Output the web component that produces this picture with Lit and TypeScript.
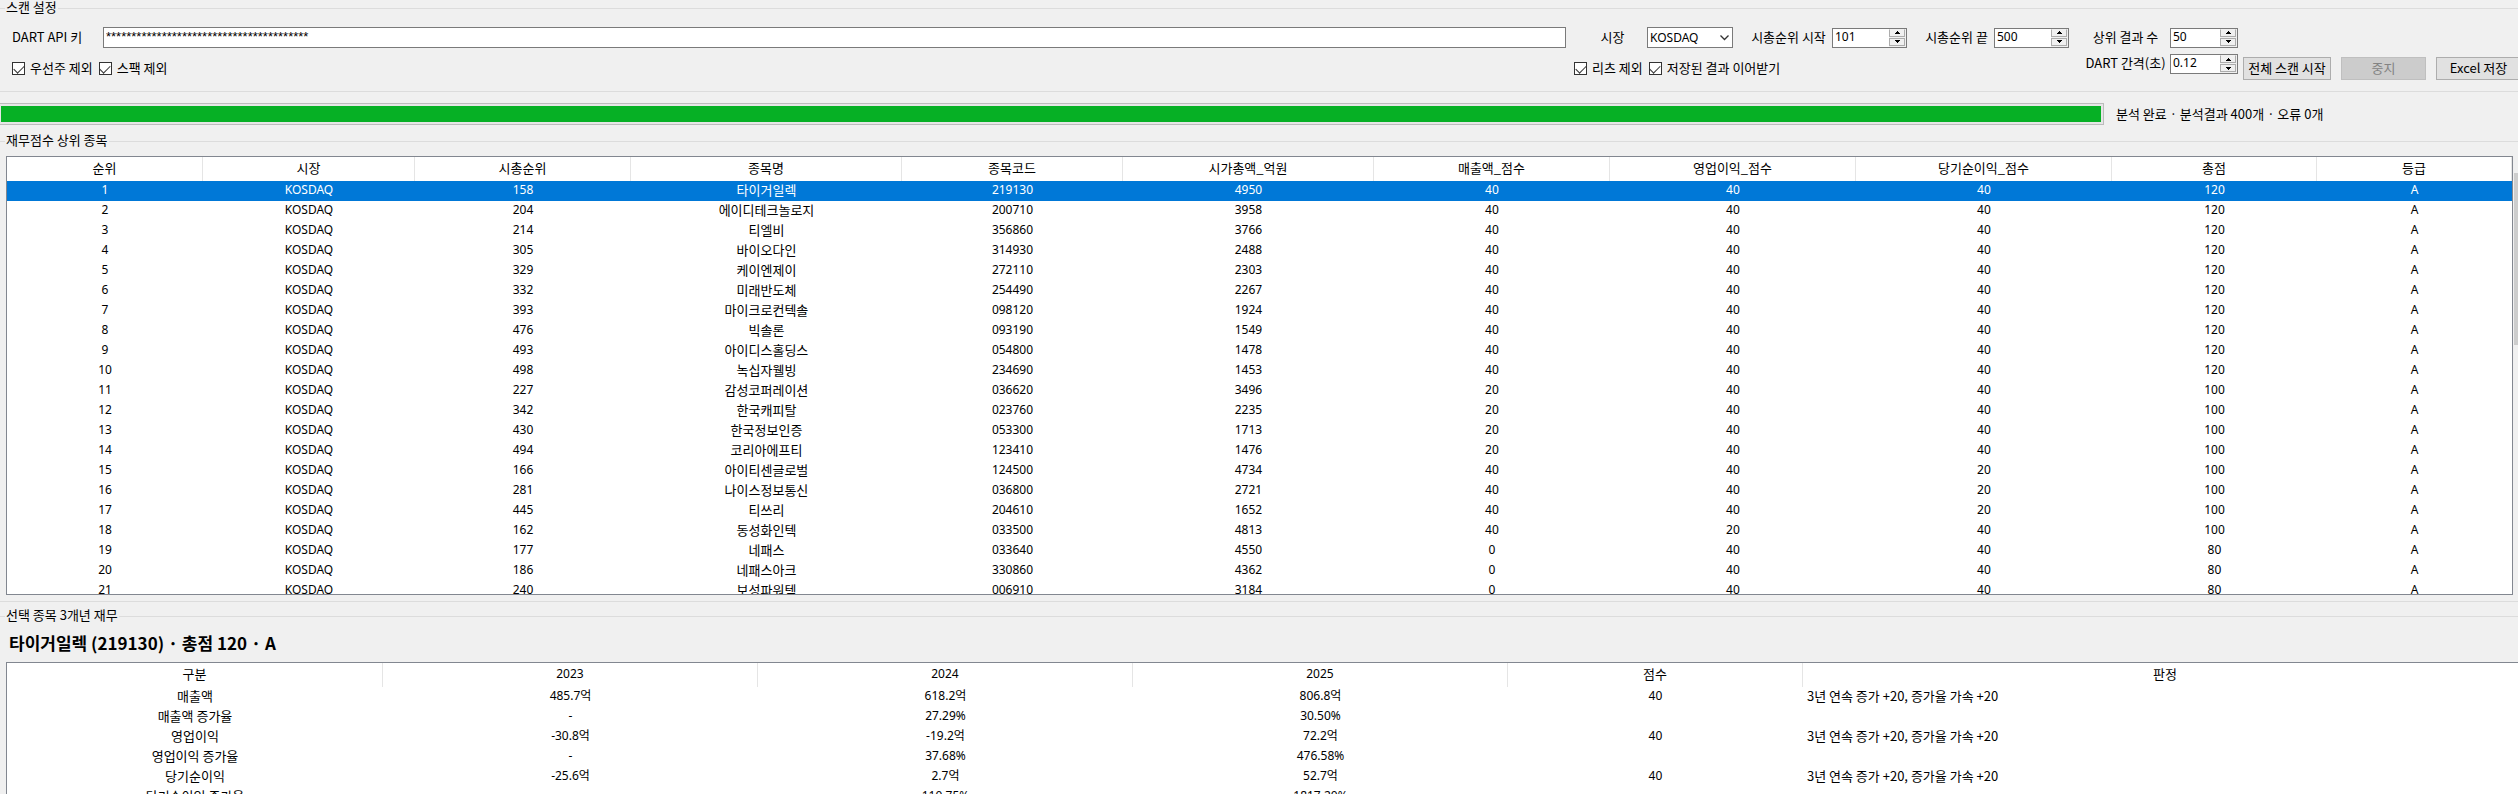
import { LitElement, html, css } from "lit";
import { customElement, property } from "lit/decorators.js";
import { classMap } from "lit/directives/class-map.js";

type Stock = [number, number, string, string, number, number, number, number, number];

const STOCKS: Stock[] = [
  [1, 158, "타이거일렉", "219130", 4950, 40, 40, 40, 120],
  [2, 204, "에이디테크놀로지", "200710", 3958, 40, 40, 40, 120],
  [3, 214, "티엘비", "356860", 3766, 40, 40, 40, 120],
  [4, 305, "바이오다인", "314930", 2488, 40, 40, 40, 120],
  [5, 329, "케이엔제이", "272110", 2303, 40, 40, 40, 120],
  [6, 332, "미래반도체", "254490", 2267, 40, 40, 40, 120],
  [7, 393, "마이크로컨텍솔", "098120", 1924, 40, 40, 40, 120],
  [8, 476, "빅솔론", "093190", 1549, 40, 40, 40, 120],
  [9, 493, "아이디스홀딩스", "054800", 1478, 40, 40, 40, 120],
  [10, 498, "녹십자웰빙", "234690", 1453, 40, 40, 40, 120],
  [11, 227, "감성코퍼레이션", "036620", 3496, 20, 40, 40, 100],
  [12, 342, "한국캐피탈", "023760", 2235, 20, 40, 40, 100],
  [13, 430, "한국정보인증", "053300", 1713, 20, 40, 40, 100],
  [14, 494, "코리아에프티", "123410", 1476, 20, 40, 40, 100],
  [15, 166, "아이티센글로벌", "124500", 4734, 40, 40, 20, 100],
  [16, 281, "나이스정보통신", "036800", 2721, 40, 40, 20, 100],
  [17, 445, "티쓰리", "204610", 1652, 40, 40, 20, 100],
  [18, 162, "동성화인텍", "033500", 4813, 40, 20, 40, 100],
  [19, 177, "네패스", "033640", 4550, 0, 40, 40, 80],
  [20, 186, "네패스아크", "330860", 4362, 0, 40, 40, 80],
  [21, 240, "보성파워텍", "006910", 3184, 0, 40, 40, 80],
];

const STOCK_HEADS = ["순위", "시장", "시총순위", "종목명", "종목코드", "시가총액_억원", "매출액_점수", "영업이익_점수", "당기순이익_점수", "총점", "등급"];
const VERDICT = "3년 연속 증가 +20, 증가율 가속 +20";
const DETAIL_HEADS = ["구분", "2023", "2024", "2025", "점수", "판정"];
const DETAILS: string[][] = [
  ["매출액", "485.7억", "618.2억", "806.8억", "40", VERDICT],
  ["매출액 증가율", "-", "27.29%", "30.50%", "", ""],
  ["영업이익", "-30.8억", "-19.2억", "72.2억", "40", VERDICT],
  ["영업이익 증가율", "-", "37.68%", "476.58%", "", ""],
  ["당기순이익", "-25.6억", "2.7억", "52.7억", "40", VERDICT],
  ["당기순이익 증가율", "-", "110.75%", "1817.20%", "", ""],
];

const base = css`
  * { box-sizing: border-box; }
  input, select, button { font: inherit; color: inherit; margin: 0; border-radius: 0; }
`;

@customElement("spin-box")
class SpinBox extends LitElement {
  @property() value = "";
  @property() label = "";
  @property() step = "1";

  static styles = [base, css`
    :host { display: block; height: 20px; }
    .box { display: flex; height: 20px; background: #fff; border: 1px solid #7a7a7a; }
    .field {
      flex: 1; min-width: 0; border: 0; outline: 0; padding: 0 2px; background: none;
      line-height: 15px; height: 15px; font-size: 12px; appearance: textfield; -moz-appearance: textfield;
    }
    .field::-webkit-inner-spin-button { appearance: none; -webkit-appearance: none; margin: 0; }
    .arrows { display: flex; flex-direction: column; width: 17px; gap: 1px; padding: 0 1px 1px 0; background: #f0f0f0; }
    .arrow {
      flex: 1; min-height: 0; padding: 0; display: flex; align-items: center; justify-content: center;
      background: #f0f0f0; border: 1px solid #acacac;
    }
    .up { border-top-color: #f0f0f0; }
    svg { display: block; width: 5px; height: 3px; }
  `];

  private nudge(dir: number) {
    const step = Number(this.step);
    const digits = (this.step.split(".")[1] ?? "").length;
    this.value = (Number(this.value) + dir * step).toFixed(digits);
  }

  render() {
    return html`<div class="box">
      <input class="field" type="number" aria-label=${this.label} step=${this.step} .value=${this.value} />
      <span class="arrows">
        <button class="arrow up" aria-label="증가" @click=${() => this.nudge(1)}>
          <svg viewBox="0 0 5 3" shape-rendering="crispEdges"><path d="M2 0h1v1h1v1h1v1H0V2h1V1h1z" /></svg>
        </button>
        <button class="arrow" aria-label="감소" @click=${() => this.nudge(-1)}>
          <svg viewBox="0 0 5 3" shape-rendering="crispEdges"><path d="M0 0h5v1H4v1H3v1H2V2H1V1H0z" /></svg>
        </button>
      </span>
    </div>`;
  }
}

@customElement("app-root")
class AppRoot extends LitElement {
  static styles = [base, css`
    :host {
      display: flex; flex-direction: column; height: 100vh; overflow: hidden;
      background: #f0f0f0; color: #000;
      font: 13px/17px "Noto Sans CJK KR", "Noto Sans", sans-serif;
    }
    .group { margin: 0; padding: 0; border: 0 solid #dcdcdc; border-width: 1px 0; min-width: 0; flex: none; }
    .legend { margin-left: 5px; padding: 0 1px; height: 17px; line-height: 13px; }
    .latin { font-family: "Noto Sans", "Noto Sans CJK KR", sans-serif; font-size: 12px; }

    .settings {
      display: grid; row-gap: 6px; padding: 10px 0 8px 12px; align-items: center;
      grid-template-columns: 91px minmax(200px, 1fr) 81px 86px 99px 75px 87px 75px 101px 68px 280px;
      grid-template-rows: 21px 29px;
    }
    .name { padding-bottom: 2px; }
    .key {
      width: 100%; height: 21px; padding: 0 2px 3px; border: 1px solid #7a7a7a; outline: 0; background: #fff;
      font: 13px/16px "Liberation Sans", Arial, sans-serif;
    }
    .caption { padding: 0 0 2px 12px; text-align: center; white-space: nowrap; line-height: 18px; }
    .combo { position: relative; height: 21px; }
    .select {
      width: 100%; height: 21px; padding: 0 2px 1px; border: 1px solid #7a7a7a; background: #fff; outline: 0;
      appearance: none; -webkit-appearance: none; line-height: 17px;
    }
    .chevron { position: absolute; right: 4px; top: 8px; width: 9px; height: 6px; pointer-events: none; }
    .top { align-self: start; }
    .checks { display: flex; gap: 6px; white-space: nowrap; }
    .checks-left { grid-column: 1 / 3; }
    .checks-right { grid-column: 3 / 9; padding-left: 8px; }
    .check { display: flex; align-items: center; gap: 5px; }
    .tick {
      appearance: none; -webkit-appearance: none; width: 13px; height: 13px; border: 1px solid #333; background: #fff;
      display: grid; place-items: center;
    }
    .tick:checked::before {
      content: ""; width: 9px; height: 5px; border: solid #333; border-width: 0 0 1px 1px;
      transform: translateY(-1px) rotate(-45deg);
    }
    .actions { display: flex; gap: 10px; padding-left: 5px; }
    .button {
      flex: none; width: 85px; height: 23px; padding: 0 0 2px; border: 1px solid #adadad; background: #e1e1e1;
      white-space: nowrap; line-height: 17px;
    }
    .button.primary { width: 88px; }
    .button:disabled { background: #ccc; border-color: #bfbfbf; color: #838383; }

    .status { display: flex; align-items: center; margin: 11px 0 8px -2px; flex: none; }
    .bar {
      flex: 1; height: 22px; appearance: none; -webkit-appearance: none; padding: 2px;
      border: 1px solid #bcbcbc; background: #e6e6e6;
    }
    .bar::-webkit-progress-bar { background: #e6e6e6; }
    .bar::-webkit-progress-value { background: #06b025; }
    .message { width: 414px; padding: 0 0 2px 12px; white-space: nowrap; }

    .list { display: flex; gap: 1px; padding: 6px 0 6px 6px; }
    .sheet { flex: 1; min-width: 0; height: 439px; overflow: hidden; background: #fff; border: 1px solid #828790; }
    .track { flex: none; width: 4px; height: 439px; padding-top: 17px; }
    .thumb { height: 172px; background: #cdcdcd; }

    .table { width: 100%; table-layout: fixed; border-collapse: separate; border-spacing: 0; }
    .table th, .table td {
      padding: 0 0 2px; text-align: center; white-space: nowrap; overflow: hidden; font-weight: 400; line-height: 18px;
    }
    .table th { height: 24px; border-right: 1px solid #e5e5e5; }
    .table td { height: 20px; }
    .picked { background: #0078d7; color: #fff; }
    .table td.verdict { text-align: left; padding-left: 4px; }

    .lower { margin-top: 6px; flex: 1 0 0; border-bottom: 0; min-height: 0; }
    .title { margin: 0; padding: 0 0 2px 9px; font-size: 17px; line-height: 35px; font-weight: 700; }
    .detail { margin: 0 -11px 0 6px; height: 160px; background: #fff; border: 1px solid #828790; }
  `];

  private check(id: string, text: string) {
    return html`<label class="check" for=${id}
      ><input class="tick" id=${id} type="checkbox" checked /><span class="name">${text}</span></label
    >`;
  }

  private cols(widths: number[]) {
    const total = widths.reduce((a, b) => a + b, 0);
    return html`<colgroup>${widths.map((w) => html`<col style="width:${(w / total) * 100}%" />`)}</colgroup>`;
  }

  render() {
    return html`
      <fieldset class="group">
        <legend class="legend">스캔 설정</legend>
        <div class="settings">
          <label class="name" for="key">DART API 키</label>
          <input class="key" id="key" type="text" .value=${"*".repeat(40)} />
          <label class="caption" for="market">시장</label>
          <div class="combo">
            <select class="select latin" id="market"><option>KOSDAQ</option><option>KOSPI</option></select>
            <svg class="chevron" viewBox="0 0 9 6"><path d="M.5.5l4 4 4-4" fill="none" stroke="#333" stroke-width="1.3" /></svg>
          </div>
          <span class="caption">시총순위 시작</span>
          <spin-box class="latin" label="시총순위 시작" value="101"></spin-box>
          <span class="caption">시총순위 끝</span>
          <spin-box class="latin" label="시총순위 끝" value="500"></spin-box>
          <span class="caption">상위 결과 수</span>
          <spin-box class="latin" label="상위 결과 수" value="50"></spin-box>
          <span></span>
          <div class="checks checks-left">${this.check("pref", "우선주 제외")}${this.check("spac", "스팩 제외")}</div>
          <div class="checks checks-right">${this.check("reit", "리츠 제외")}${this.check("resume", "저장된 결과 이어받기")}</div>
          <span class="caption top">DART 간격(초)</span>
          <spin-box class="latin top" label="DART 간격(초)" value="0.12" step="0.01"></spin-box>
          <div class="actions">
            <button class="button primary">전체 스캔 시작</button>
            <button class="button" disabled>중지</button>
            <button class="button">Excel 저장</button>
          </div>
        </div>
      </fieldset>

      <div class="status">
        <progress class="bar" max="100" value="100" aria-label="분석 진행률"></progress>
        <span class="message">분석 완료 · 분석결과 400개 · 오류 0개</span>
      </div>

      <fieldset class="group">
        <legend class="legend">재무점수 상위 종목</legend>
        <div class="list">
          <div class="sheet">
            <table class="table">
              ${this.cols([196, 212, 216, 271, 221, 251, 236, 246, 256, 205, 195])}
              <thead><tr>${STOCK_HEADS.map((h) => html`<th>${h}</th>`)}</tr></thead>
              <tbody>
                ${STOCKS.map(([rank, capRank, name, code, cap, ...scores], i) => html`
                  <tr class=${classMap({ picked: i === 0 })}>
                    <td class="latin">${rank}</td><td class="latin">KOSDAQ</td><td class="latin">${capRank}</td>
                    <td>${name}</td><td class="latin">${code}</td><td class="latin">${cap}</td>
                    ${scores.map((s) => html`<td class="latin">${s}</td>`)}
                    <td class="latin">A</td>
                  </tr>`)}
              </tbody>
            </table>
          </div>
          <div class="track"><div class="thumb"></div></div>
        </div>
      </fieldset>

      <fieldset class="group lower">
        <legend class="legend">선택 종목 3개년 재무</legend>
        <h2 class="title">타이거일렉 (219130) · 총점 120 · A</h2>
        <div class="detail">
          <table class="table">
            ${this.cols([376, 375, 375, 375, 295, 725])}
            <thead><tr>${DETAIL_HEADS.map((h) => html`<th class=${classMap({ latin: /^\d/.test(h) })}>${h}</th>`)}</tr></thead>
            <tbody>
              ${DETAILS.map((row) => html`<tr>${row.map((cell, i) => html`
                <td class=${classMap({ verdict: i === 5, latin: i > 0 && i < 5 })}>${cell}</td>`)}</tr>`)}
            </tbody>
          </table>
        </div>
      </fieldset>
    `;
  }
}
